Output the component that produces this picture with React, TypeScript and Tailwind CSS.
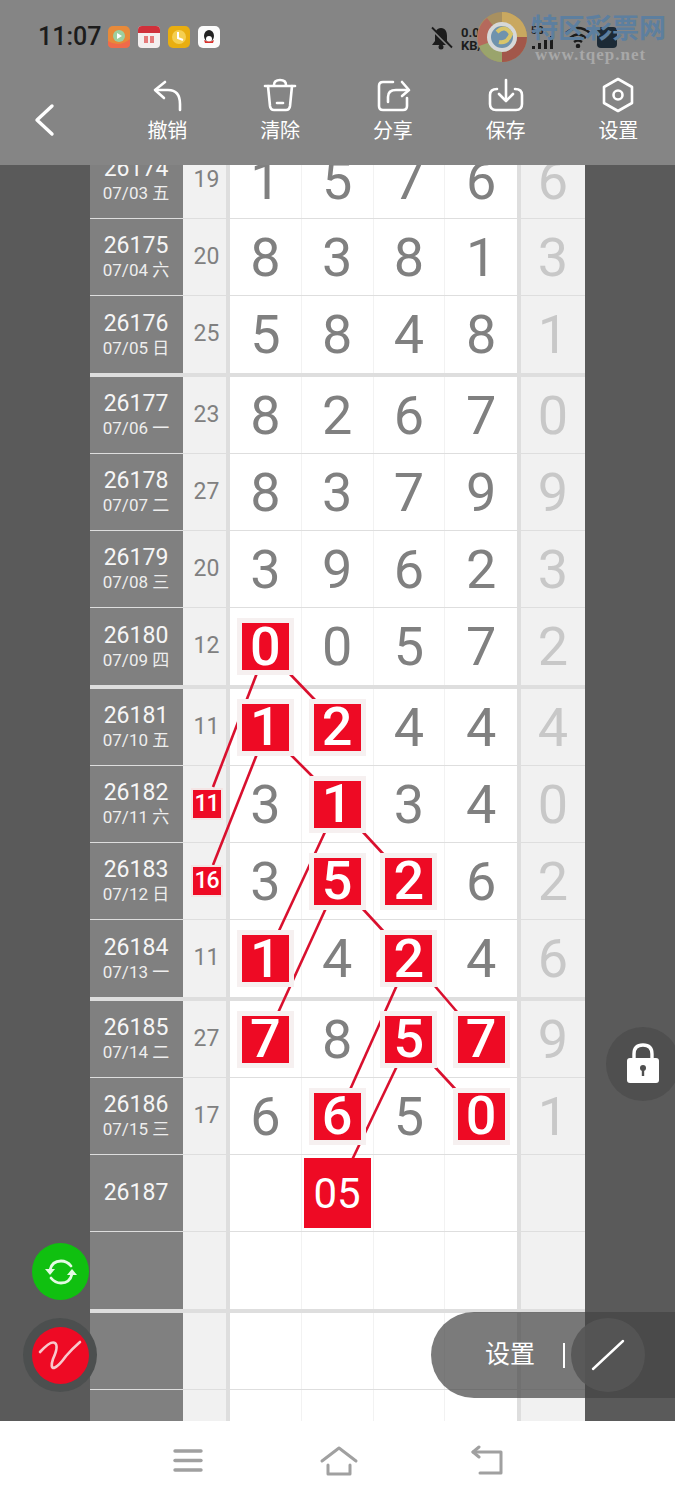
import React from "react";

type Row = { id?: string; date?: string; sum?: string; sumRed?: boolean; d?: string[]; red?: number[]; last?: string; big?: boolean };

const g1: Row[] = [
  { id: "26174", date: "07/03 五", sum: "19", d: ["1", "5", "7", "6"], last: "6" },
  { id: "26175", date: "07/04 六", sum: "20", d: ["8", "3", "8", "1"], last: "3" },
  { id: "26176", date: "07/05 日", sum: "25", d: ["5", "8", "4", "8"], last: "1" },
];
const g2: Row[] = [
  { id: "26177", date: "07/06 一", sum: "23", d: ["8", "2", "6", "7"], last: "0" },
  { id: "26178", date: "07/07 二", sum: "27", d: ["8", "3", "7", "9"], last: "9" },
  { id: "26179", date: "07/08 三", sum: "20", d: ["3", "9", "6", "2"], last: "3" },
  { id: "26180", date: "07/09 四", sum: "12", d: ["0", "0", "5", "7"], red: [0], last: "2" },
];
const g3: Row[] = [
  { id: "26181", date: "07/10 五", sum: "11", d: ["1", "2", "4", "4"], red: [0, 1], last: "4" },
  { id: "26182", date: "07/11 六", sum: "11", sumRed: true, d: ["3", "1", "3", "4"], red: [1], last: "0" },
  { id: "26183", date: "07/12 日", sum: "16", sumRed: true, d: ["3", "5", "2", "6"], red: [1, 2], last: "2" },
  { id: "26184", date: "07/13 一", sum: "11", d: ["1", "4", "2", "4"], red: [0, 2], last: "6" },
];
const g4: Row[] = [
  { id: "26185", date: "07/14 二", sum: "27", d: ["7", "8", "5", "7"], red: [0, 2, 3], last: "9" },
  { id: "26186", date: "07/15 三", sum: "17", d: ["6", "6", "5", "0"], red: [1, 3], last: "1" },
  { id: "26187", big: true },
  {},
];
const g5: Row[] = [{}, {}, {}];

const lines = [
  [257, 673, 213, 787],
  [289, 673, 315, 700],
  [257, 754, 213, 865],
  [290, 754, 315, 779],
  [325, 832, 277, 935],
  [362, 831, 386, 857],
  [326, 908, 277, 1015],
  [362, 908, 386, 934],
  [397, 985, 349, 1092],
  [434, 985, 458, 1013],
  [397, 1066, 352, 1160],
  [434, 1066, 458, 1092],
];

function TableRow({ r, border }: { r: Row; border: boolean }) {
  return (
    <div className={`flex h-[77px] box-border ${border ? "border-b border-[#dedede]" : ""}`}>
      <div className="w-[93px] bg-[#808080] text-white flex flex-col items-center justify-center leading-none pr-[1px]">
        {r.id && <div className="text-[23px] leading-[26px] text-[#f6f6f6]">{r.id}</div>}
        {r.date && <div className="text-[17px] leading-[22px] text-[#eeeeee]">{r.date}</div>}
      </div>
      <div className="w-[43px] bg-[#f1f1f1] text-[#808080] text-[23px] flex items-center justify-center pl-[4px]">
        {r.sum && !r.sumRed && r.sum}
        {r.sum && r.sumRed && (
          <div className="relative z-20 w-[28px] h-[28px] bg-[#ee0a24] text-white font-medium text-[23px] tracking-[-1px] flex items-center justify-center shadow-[0_0_0_2px_#f4e4e4]">
            {r.sum}
          </div>
        )}
      </div>
      <div className="w-[4px] bg-[#dedede]" />
      {[0, 1, 2, 3].map((c) => (
        <div key={c} className={`w-[71.75px] bg-white flex items-center justify-center text-[54px] text-[#808080] ${c < 3 ? "border-r border-[#f2f2f2]" : ""}`}>
          {r.big && c === 1 ? (
            <div className="relative z-20 w-[67px] h-[70px] shrink-0 bg-[#ee0a24] text-white text-[42px] flex items-center justify-center">05</div>
          ) : r.red?.includes(c) ? (
            <div className="relative z-20 w-[47px] h-[47px] shrink-0 bg-[#ee0a24] text-white font-medium text-[54px] leading-none flex items-center justify-center shadow-[0_0_0_5px_#f6f0f0]">
              {r.d?.[c]}
            </div>
          ) : (
            r.d?.[c]
          )}
        </div>
      ))}
      <div className="w-[4px] bg-[#dedede]" />
      <div className="w-[64px] bg-[#f1f1f1] text-[#c8c8c8] text-[54px] flex items-center justify-center">{r.last}</div>
    </div>
  );
}

function Group({ rows, thick = true }: { rows: Row[]; thick?: boolean }) {
  return (
    <div>
      {rows.map((r, i) => (
        <TableRow key={i} r={r} border={i < rows.length - 1 || !thick} />
      ))}
      {thick && <div className="h-[4px] bg-[#dedede]" />}
    </div>
  );
}

function NavItem({ label, children }: { label: string; children: React.ReactNode }) {
  return (
    <div className="w-[112.75px] flex flex-col items-center">
      <svg width="40" height="40" viewBox="0 0 40 40" fill="none" stroke="white" strokeWidth="2.6" strokeLinecap="round" strokeLinejoin="round">
        {children}
      </svg>
      <div className="text-white text-[20px] leading-[26px] mt-[3px]">{label}</div>
    </div>
  );
}

export default function App() {
  return (
    <div className="relative w-[675px] h-[1500px] overflow-hidden flex flex-col bg-white font-['Roboto','Noto_Sans_CJK_SC',sans-serif]">
      {/* header */}
      <header className="h-[165px] bg-[#858585] flex flex-col shrink-0">
        <div className="h-[75px] flex items-start pl-[38px] pt-[22px] relative">
          <span className="text-[25px] leading-[30px] font-medium text-[#1c1c1c] w-[70px]">11:07</span>
          <div className="flex gap-[8px] mt-[4px]">
            <svg width="22" height="22" viewBox="0 0 22 22">
              <rect width="22" height="22" rx="5" fill="#e78a3a" />
              <path d="M0 15 Q11 22 22 13 V18 Q22 22 17 22 H5 Q0 22 0 18 Z" fill="#f06a4a" />
              <circle cx="11" cy="10" r="6" fill="#9ccfa0" />
              <path d="M9 7 L14 10 L9 13 Z" fill="#fff" />
            </svg>
            <svg width="22" height="22" viewBox="0 0 22 22">
              <rect width="22" height="22" rx="4" fill="#f4eeee" />
              <path d="M0 7 V4 Q0 0 4 0 H18 Q22 0 22 4 V7 Z" fill="#d0303a" />
              <rect x="6" y="10" width="4" height="7" fill="#e57a7a" />
              <rect x="12" y="10" width="4" height="7" fill="#e57a7a" />
            </svg>
            <svg width="22" height="22" viewBox="0 0 22 22">
              <rect width="22" height="22" rx="5" fill="#e9ae10" />
              <circle cx="11" cy="11" r="7" fill="#f5cf50" />
              <path d="M10 6 V12 L15 14" stroke="#fff" strokeWidth="2" fill="none" />
            </svg>
            <svg width="22" height="22" viewBox="0 0 22 22">
              <rect width="22" height="22" rx="5" fill="#fbfbfb" />
              <ellipse cx="11" cy="10" rx="5" ry="6" fill="#222" />
              <ellipse cx="11" cy="13" rx="3" ry="3" fill="#fff" />
              <path d="M6 14 Q11 17 16 14 L15 17 H7 Z" fill="#d8302a" />
            </svg>
          </div>
          {/* status right */}
          <svg className="absolute left-[429px] top-[26px]" width="24" height="24" viewBox="0 0 24 24" fill="#1c1c1c">
            <path d="M12 2 C7.5 2 6 6 6 10 V15 L3 19 H21 L18 15 V10 C18 6 16.500 2 12 2 Z" />
            <circle cx="12" cy="21" r="2.500" />
            <path d="M2 2 L22 22" stroke="#858585" strokeWidth="3" />
            <path d="M3 1.500 L23 21.500" stroke="#1c1c1c" strokeWidth="1.800" />
          </svg>
          <div className="absolute left-[461px] top-[26px] text-[13px] leading-[13px] font-bold text-[#1c1c1c]">0.01<br />KB/s</div>
          <div className="absolute left-[531px] top-[26px] text-[10px] leading-[10px] font-bold text-[#1c1c1c]">5G</div>
          <svg className="absolute left-[532px] top-[36px]" width="26" height="13" viewBox="0 0 26 13" fill="#1c1c1c">
            <rect x="0" y="10" width="3" height="3" />
            <rect x="6" y="7" width="3" height="6" />
            <rect x="12" y="4" width="3" height="9" />
            <rect x="18" y="0" width="3" height="13" />
          </svg>
          <svg className="absolute left-[565px] top-[26px]" width="26" height="22" viewBox="0 0 26 22" fill="none" stroke="#1c1c1c" strokeWidth="2.500">
            <path d="M1 7 Q13 -3 25 7" />
            <path d="M5 12 Q13 5 21 12" />
            <path d="M9 16 Q13 13 17 16" />
            <circle cx="13" cy="20" r="1" fill="#1c1c1c" />
          </svg>
          <div className="absolute left-[597px] top-[27px] w-[20px] h-[21px] rounded-[4px] bg-[#1c2a36]" />
          {/* watermark */}
          <svg className="absolute left-[475px] top-[10px]" width="54" height="54" viewBox="0 0 54 54" fill="none">
            <circle cx="27" cy="27" r="25" fill="#a89060" />
            <path d="M27 2 A25 25 0 0 1 52 27 L40 27 A13 13 0 0 0 27 14 Z" fill="#c9a860" />
            <path d="M52 27 A25 25 0 0 1 27 52 L27 42 A15 15 0 0 0 42 27 Z" fill="#a2574a" />
            <path d="M27 52 A25 25 0 0 1 4 36 L15 32 A14 14 0 0 0 27 42 Z" fill="#9aa46c" />
            <path d="M4 36 A25 25 0 0 1 12 8 L20 18 A14 14 0 0 0 15 32 Z" fill="#b5695c" />
            <circle cx="27" cy="27" r="15" fill="#d6d8d8" />
            <circle cx="27" cy="27" r="11" fill="#6f93ad" />
            <path d="M22 22 Q30 14 36 24 Q32 34 24 32" stroke="#d8c56a" strokeWidth="4" />
          </svg>
          <div className="absolute left-[531px] top-[13px] text-[27px] leading-[32px] font-bold text-[#5d7f9f] whitespace-nowrap">特区彩票网</div>
          <div className="absolute left-[535px] top-[45px] text-[17px] leading-[20px] font-bold tracking-[1px] text-[#a8a8a8] whitespace-nowrap font-['Liberation_Serif',serif]">www.tqep.net</div>
        </div>
        <nav className="flex items-start h-[90px]">
          <div className="w-[111px] h-[90px] pl-[33px] pt-[28px] shrink-0">
            <svg width="22" height="34" viewBox="0 0 22 34" fill="none" stroke="white" strokeWidth="3.400" strokeLinecap="round" strokeLinejoin="round">
              <path d="M19 3 L4 17 L19 31" />
            </svg>
          </div>
          <NavItem label="撤销">
            <path d="M16 11 L6 19 L15 27" transform="translate(2 -4)" />
            <path d="M9 15 H21 Q33 15 33 29 V35" transform="translate(0 0)" />
          </NavItem>
          <NavItem label="清除">
            <path d="M5 11 H35" />
            <path d="M14 10 Q14 5 20 5 Q26 5 26 10" />
            <path d="M8 11 L10 31 Q10.500 35 14 35 H26 Q29.500 35 30 31 L32 11" />
            <path d="M17 28 H23" />
          </NavItem>
          <NavItem label="分享">
            <path d="M20 7 H10 Q6 7 6 11 V31 Q6 35 10 35 H30 Q34 35 34 31 V23" />
            <path d="M15 27 V22 Q15 15 23 15 H35" />
            <path d="M29 7 L36 15 L29 21" />
          </NavItem>
          <NavItem label="保存">
            <path d="M11 14 Q4 14 4 20 V29 Q4 35 10 35 H30 Q36 35 36 29 V20 Q36 14 29 14" />
            <path d="M20 5 V25" />
            <path d="M13 19 L20 26 L27 19" />
          </NavItem>
          <NavItem label="设置">
            <path d="M20 4 L34 12 V28 L20 36 L6 28 V12 Z" />
            <circle cx="20" cy="20" r="4.500" />
          </NavItem>
        </nav>
      </header>

      {/* main */}
      <main className="relative flex h-[1256px] overflow-hidden shrink-0">
        <div className="w-[90px] bg-[#5a5a5a]" />
        <div className="w-[495px] -mt-[23px]">
          <Group rows={g1} />
          <Group rows={g2} />
          <Group rows={g3} />
          <Group rows={g4} />
          <Group rows={g5} thick={false} />
        </div>
        <div className="w-[90px] bg-[#5a5a5a]" />
        <svg className="absolute left-0 top-0 z-10" width="675" height="1256" viewBox="0 165 675 1256" stroke="#d9102e" strokeWidth="2.600" fill="none">
          {lines.map((l, i) => (
            <line key={i} x1={l[0]} y1={l[1]} x2={l[2]} y2={l[3]} />
          ))}
        </svg>
      </main>

      {/* bottom nav */}
      <footer className="h-[79px] bg-white flex items-center shrink-0 pl-[172px]">
        <svg width="32" height="28" viewBox="0 0 32 28" fill="none" stroke="#a0a0a0" strokeWidth="3.400" strokeLinecap="round">
          <path d="M3 4 H29" />
          <path d="M3 13.500 H29" />
          <path d="M3 23 H29" />
        </svg>
        <svg className="ml-[115px]" width="40" height="32" viewBox="0 0 40 32" fill="none" stroke="#a0a0a0" strokeWidth="3" strokeLinecap="round" strokeLinejoin="round">
          <path d="M3 16 L20 3 L37 16" />
          <path d="M9 20 V29 H31 V20" />
        </svg>
        <svg className="ml-[111px]" width="36" height="32" viewBox="0 0 36 32" fill="none" stroke="#a0a0a0" strokeWidth="3" strokeLinecap="round" strokeLinejoin="round">
          <path d="M3 7 H31 V28 H10" />
          <path d="M9 2 L3 7 L9 12" />
        </svg>
      </footer>

      {/* floating */}
      <div className="absolute z-30 left-[32px] top-[1243px] w-[57px] h-[57px] rounded-full bg-[#10c010] flex items-center justify-center">
        <svg width="34" height="34" viewBox="0 0 34 34" fill="none" stroke="#e4fbe4" strokeWidth="2.800" strokeLinecap="round">
          <path d="M6 15 Q8 6 17 6 Q23 6 27 11" />
          <path d="M28 19 Q26 28 17 28 Q11 28 7 23" />
          <path d="M1 14 H11 L6 20 Z" fill="#e4fbe4" stroke="none" />
          <path d="M23 20 H33 L28 14 Z" fill="#e4fbe4" stroke="none" />
        </svg>
      </div>
      <div className="absolute z-30 left-[23px] top-[1318px] w-[74px] h-[74px] rounded-full bg-[#4c4f4f] flex items-center justify-center">
        <div className="w-[57px] h-[57px] rounded-full bg-[#ee0a24] flex items-center justify-center">
          <svg width="46" height="40" viewBox="0 0 46 40" fill="none" stroke="#f8c8cc" strokeWidth="2.600" strokeLinecap="round" strokeLinejoin="round">
            <path d="M3 17 Q14 5 18 8 Q22 11 16 24 Q13 33 17 33 Q22 31 29 21 Q35 14 43 7" />
          </svg>
        </div>
      </div>
      <div className="absolute z-30 left-[606px] top-[1027px] w-[74px] h-[74px] rounded-full bg-[#4f4f4f] flex items-center pl-[20px]">
        <svg width="34" height="44" viewBox="0 0 34 44" className="-mt-[2px]">
          <path d="M8 20 V13 Q8 4 17 4 Q26 4 26 13 V20" fill="none" stroke="white" strokeWidth="3.400" />
          <rect x="1" y="17" width="32" height="25" rx="3" fill="white" />
          <circle cx="17" cy="27" r="3" fill="#4f4f4f" />
          <rect x="15.800" y="28" width="2.400" height="7" fill="#4f4f4f" />
        </svg>
      </div>
      <div className="absolute z-20 left-[431px] top-[1312px] w-[244px] h-[86px] rounded-l-[43px] bg-[#434343]/70 flex items-center">
        <span className="ml-[54px] text-[25px] text-white">设置</span>
        <div className="ml-[28px] w-[2px] h-[25px] bg-white" />
        <div className="ml-[6px] w-[74px] h-[74px] rounded-full bg-[#555555]/90 flex items-center justify-center">
          <svg width="34" height="32" viewBox="0 0 34 32" stroke="white" strokeWidth="2.400" strokeLinecap="round">
            <line x1="2" y1="30" x2="32" y2="2" />
          </svg>
        </div>
      </div>
    </div>
  );
}
